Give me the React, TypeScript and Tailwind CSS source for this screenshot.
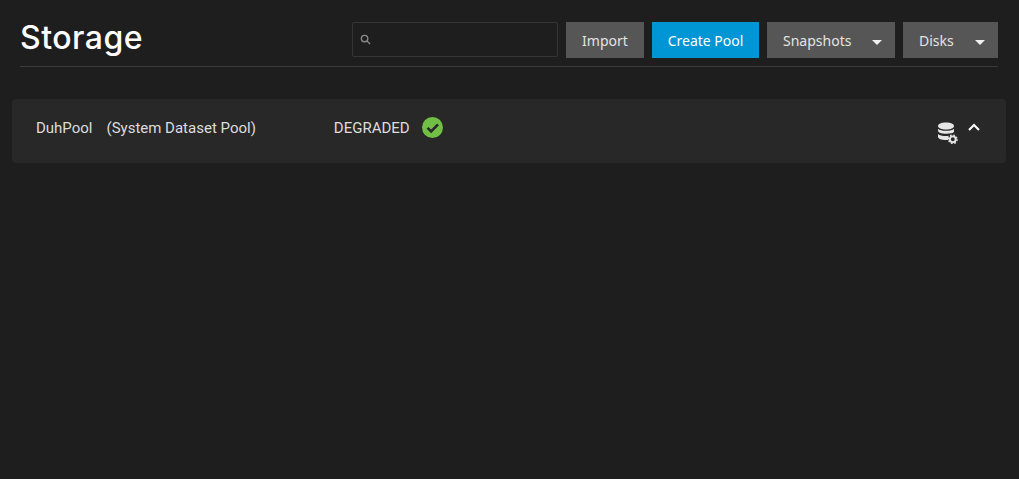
import React from "react";

function Caret() {
  return <span className="ml-auto mt-[4px] w-0 h-0 border-x-[5px] border-x-transparent border-t-[5px] border-t-[#f0f0f0]" />;
}

export default function App() {
  return (
    <div className="w-[1019px] h-[479px] bg-[#1e1e1e] overflow-hidden font-['Roboto',sans-serif] text-[#dddddd]">
      <header className="ml-[20px] w-[978px] h-[67px] border-b border-[#3a3a3a] flex items-start">
        <h1 className="mt-[17px] text-[32px] leading-[42px] font-medium text-white font-['Inter',sans-serif] tracking-[0.5px]">Storage</h1>
        <div className="ml-auto mt-[22px] flex items-start font-['Noto_Sans',sans-serif] text-[14px]">
          <div className="w-[206px] h-[35px] border border-[#353535] rounded-[2px] flex items-center pl-[7px] mr-[8px]">
            <svg width="11" height="11" viewBox="0 0 24 24" fill="none" stroke="#8a8a8a" strokeWidth="3">
              <circle cx="10" cy="10" r="7" />
              <path d="M15 15l7 7" />
            </svg>
          </div>
          <button className="w-[78px] h-[36px] bg-[#565656] mr-[8px] text-[#e3e3e3]">Import</button>
          <button className="w-[107px] h-[36px] bg-[#0095d5] mr-[8px] text-white">Create Pool</button>
          <button className="w-[128px] h-[36px] bg-[#565656] mr-[8px] pl-[16px] pr-[13px] flex items-center text-[#e3e3e3]">
            Snapshots
            <Caret />
          </button>
          <button className="w-[95px] h-[36px] bg-[#565656] pl-[16px] pr-[13px] flex items-center text-[#e3e3e3]">
            Disks
            <Caret />
          </button>
        </div>
      </header>
      <section className="ml-[12px] mt-[32px] w-[994px] h-[64px] bg-[#282828] rounded-[4px] flex items-start text-[15px] leading-[20px]">
        <span className="ml-[24px] mt-[19px]">DuhPool</span>
        <span className="ml-[14px] mt-[19px]">(System Dataset Pool)</span>
        <span className="ml-[78px] mt-[19px]">DEGRADED</span>
        <svg width="21" height="21" viewBox="0 0 21 21" className="ml-[12px] mt-[18px]">
          <circle cx="10.5" cy="10.5" r="10.5" fill="#71bf44" />
          <path d="M5.5 10.8l3.700 3.700L16 7.300" fill="none" stroke="#282828" strokeWidth="2.600" />
        </svg>
        <svg width="22" height="22" viewBox="0 0 22 22" className="ml-auto mt-[23px]">
          <path d="M1 4C1 1.800 4.400.5 9 .5s8 1.300 8 3.500-3.400 3.500-8 3.500S1 6.200 1 4z" fill="#e6e6e6" />
          <path d="M1 6.800C2.200 8.200 5.400 8.800 9 8.800s6.800-.6 8-2v3.200c-.6.300-1.100.6-1.500 1-1.800.500-4 .8-6.500.8-4.600 0-8-1.300-8-3.300z" fill="#e6e6e6" />
          <path d="M1 12c1.200 1.400 4.400 2 8 2 .9 0 1.800 0 2.700-.2-.5 1.300-.5 2.700-.1 4-.8.1-1.700.2-2.600.2-4.600 0-8-1.300-8-3.300z" fill="#e6e6e6" />
          <circle cx="15.800" cy="17.300" r="2.900" fill="none" stroke="#e6e6e6" strokeWidth="1.900" />
          <circle cx="15.800" cy="17.300" r="4.200" fill="none" stroke="#e6e6e6" strokeWidth="1.500" strokeDasharray="1.650 1.650" />
        </svg>
        <svg width="12" height="8" viewBox="0 0 12 8" className="ml-[9px] mr-[26px] mt-[24px]">
          <path d="M1 7l5-5 5 5" fill="none" stroke="#ffffff" strokeWidth="2" />
        </svg>
      </section>
    </div>
  );
}
